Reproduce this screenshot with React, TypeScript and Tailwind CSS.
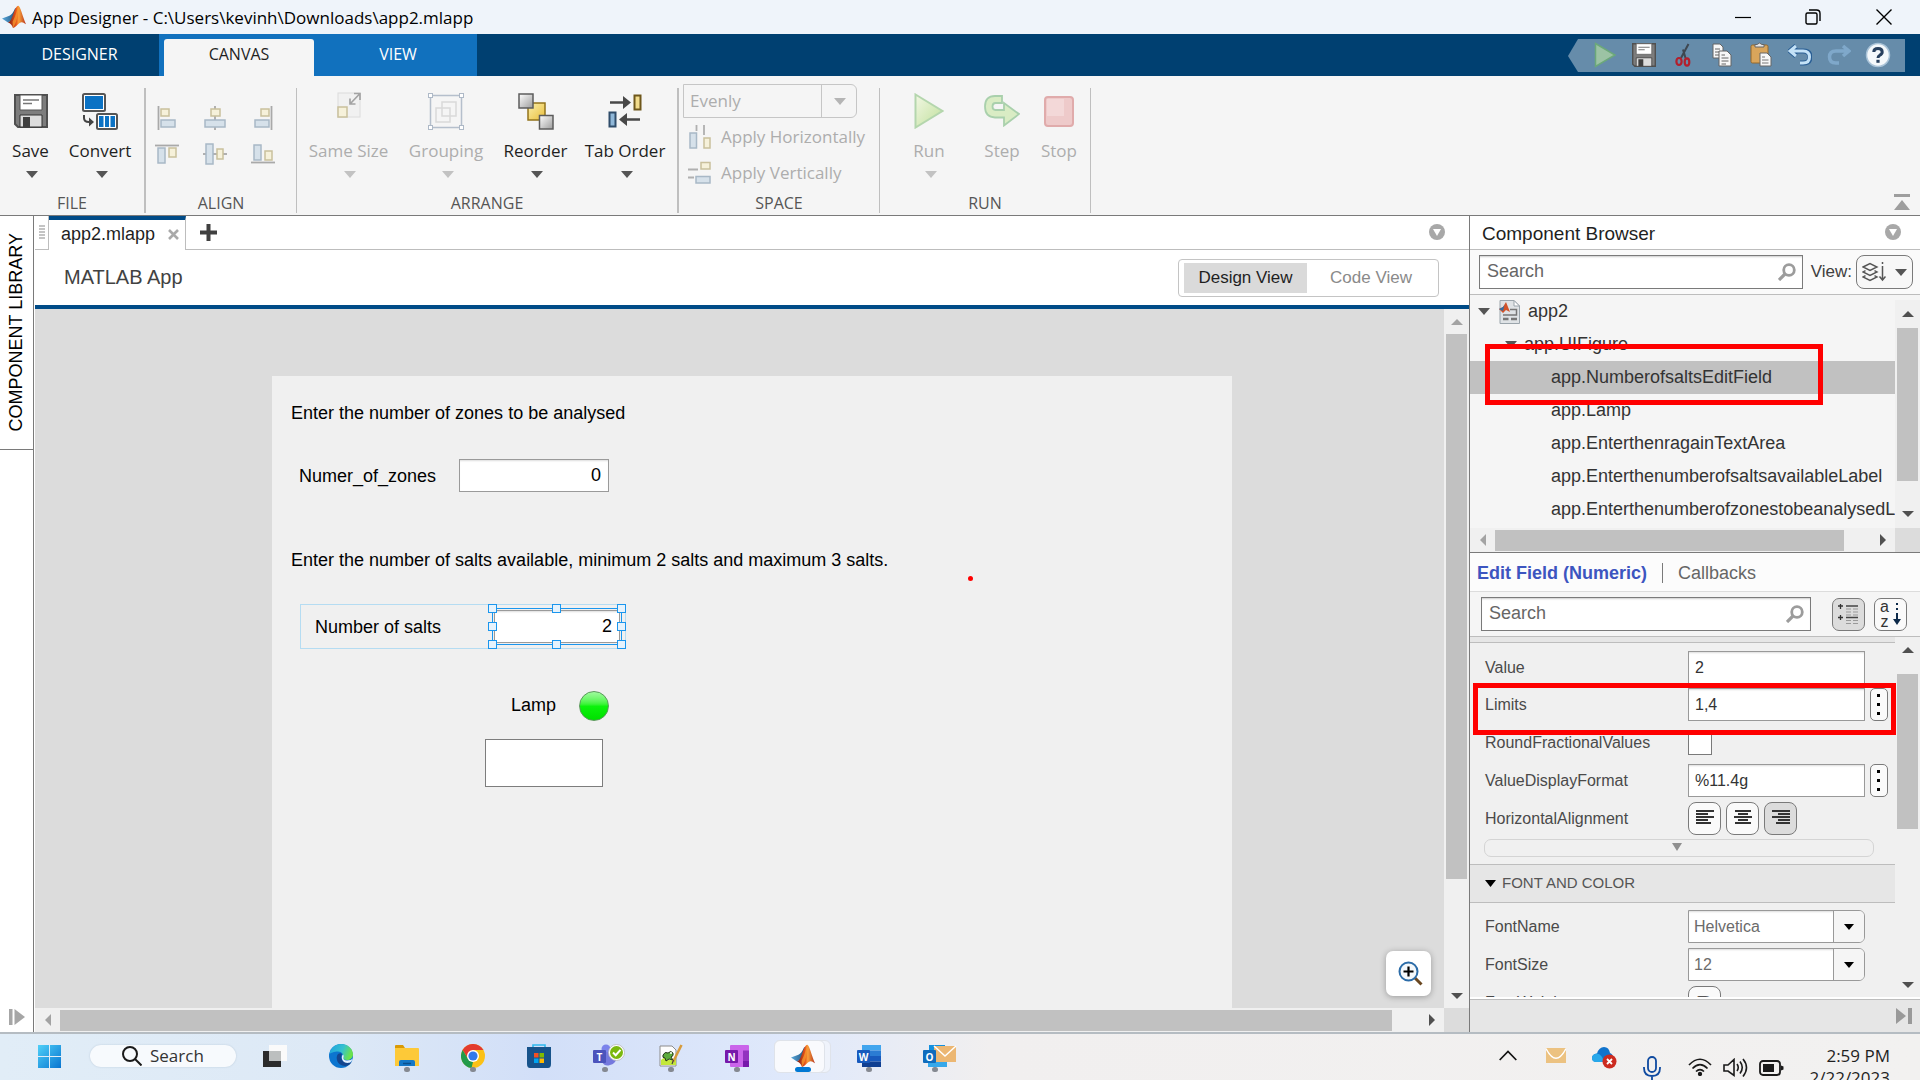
import React from "react";

type Kids = { children?: React.ReactNode };

function MatlabLogo({ size }: { size: number }) {
  return (
    <svg width={size} height={size} viewBox="0 0 24 24" aria-hidden="true">
      <defs>
        <linearGradient id="mlBlue" x1="0" y1="0" x2="1" y2="0">
          <stop offset="0" stopColor="#5aa9dc" />
          <stop offset="1" stopColor="#1d4f7c" />
        </linearGradient>
        <linearGradient id="mlRed" x1="0" y1="0" x2="1" y2="0">
          <stop offset="0" stopColor="#7a1c14" />
          <stop offset="0.45" stopColor="#e8551c" />
          <stop offset="0.6" stopColor="#f9a13b" />
          <stop offset="1" stopColor="#b5301b" />
        </linearGradient>
      </defs>
      <path d="M0 13.6 7.4 10.8C9.5 10 11.5 7 13 3.5L14.5 3 9.6 15.5 6 17.6Z" fill="url(#mlBlue)" />
      <path d="M6 17.6C8.5 16.5 9.5 14 11.5 8.500 13 4.500 14.500.8 16.200.8 18.300.8 20.500 11.500 24 19.200 21 17 19.500 16.600 17.600 18 15 20 13.500 22.300 11 23 10 20.500 8.500 18.200 6 17.600Z" fill="url(#mlRed)" />
      <path d="M16.200.8C15.300 5 13.200 12 10.600 16.800L11 23C14.500 18 16.800 8 16.200.8Z" fill="#f79a2d" opacity=".75" />
    </svg>
  );
}

function FloppyIcon({ size }: { size: number }) {
  return (
    <svg width={size} height={size} viewBox="0 0 34 34" aria-hidden="true">
      <path d="M1 1H33V33H4L1 30Z" fill="#7d7d7d" stroke="#505050" strokeWidth="2" />
      <path d="M6 1H28V16H6Z" fill="#fff" stroke="#555" />
      <path d="M9 6H25M9 9.500H18" stroke="#777" strokeWidth="1.500" />
      <path d="M6 21H28V33H6Z" fill="#dcdcdc" stroke="#333" />
      <path d="M9 23H16V33H9Z" fill="#3f3f3f" />
    </svg>
  );
}

function ConvertIcon() {
  return (
    <svg width="36" height="37" viewBox="0 0 36 37" aria-hidden="true">
      <rect x="1" y="1" width="22" height="17" rx="1.500" fill="#fff" stroke="#555" strokeWidth="2" />
      <rect x="3" y="3" width="18" height="13" fill="#0b72c4" />
      <rect x="15" y="21" width="20" height="15" rx="1.500" fill="#fff" stroke="#555" strokeWidth="2" />
      <path d="M17 23h4.500v11H17zM23 23h4v11h-4zM28.500 23H33v11h-4.500z" fill="#0b72c4" />
      <path d="M2 22v3q0 4 5 4h3" fill="none" stroke="#444" strokeWidth="2" />
      <path d="M7 24.500 12 29 7 33.500Z" fill="#444" />
    </svg>
  );
}

const alignShapes: Record<string, [string, number[], number[]]> = {
  "Align left": ["M3.500 0V24", [6, 3, 8, 7], [6, 14, 14, 7]],
  "Align center": ["M12 0V24", [8, 3, 9, 7], [2, 14, 20, 7]],
  "Align right": ["M20.500 0V24", [10, 3, 8, 7], [4, 14, 14, 7]],
  "Align top": ["M0 3.500H24", [14, 6, 7, 9], [3, 6, 7, 15]],
  "Align middle": ["M0 12H24", [14, 7, 6, 10], [3, 2, 7, 20]],
  "Align bottom": ["M0 20.500H24", [14, 9, 7, 9], [3, 3, 7, 15]],
};

function AlignIcon({ name }: { name: string }) {
  const [line, y, b] = alignShapes[name];
  return (
    <svg width="24" height="24" viewBox="0 0 24 24" aria-hidden="true">
      <path d={line} stroke="#a9a9a9" strokeWidth="1.800" />
      <rect x={y[0]} y={y[1]} width={y[2]} height={y[3]} fill="#f6f1da" stroke="#c9c09c" strokeWidth="1.500" />
      <rect x={b[0]} y={b[1]} width={b[2]} height={b[3]} fill="#d6e1ea" stroke="#a8b8c6" strokeWidth="1.500" />
    </svg>
  );
}

function SameSizeIcon() {
  return (
    <svg width="24" height="26" viewBox="0 0 24 26" className="-mt-[12px]" aria-hidden="true">
      <rect x="1" y="1" width="22" height="24" fill="#f1f1f1" stroke="#dcdcdc" />
      <rect x="1" y="15" width="9" height="10" fill="#f6f1da" stroke="#c9c09c" strokeWidth="1.500" />
      <path d="M13 12 23 1.500M17 1.500H23V8M13 6.500V12H18.500" fill="none" stroke="#a3a3a3" strokeWidth="1.700" />
    </svg>
  );
}

function GroupingIcon() {
  return (
    <svg width="36" height="37" viewBox="0 0 36 37" fill="none" aria-hidden="true">
      <rect x="2.500" y="2.500" width="31" height="32" stroke="#b5bfcc" strokeWidth="1.500" />
      <g fill="#fff" stroke="#aeb9c7">
        <rect x=".5" y=".5" width="4" height="4" />
        <rect x="31.500" y=".5" width="4" height="4" />
        <rect x=".5" y="32.500" width="4" height="4" />
        <rect x="31.500" y="32.500" width="4" height="4" />
      </g>
      <path d="M14 9H28V23H14ZM8 15H22V29H8ZM14 15H22V23H14Z" stroke="#d9d9d9" strokeWidth="1.500" />
    </svg>
  );
}

function ReorderIcon() {
  return (
    <svg width="36" height="37" viewBox="0 0 36 37" aria-hidden="true">
      <defs>
        <linearGradient id="roG" x1="0" y1="0" x2="1" y2="1">
          <stop offset="0" stopColor="#fff" />
          <stop offset="1" stopColor="#9c9c9c" />
        </linearGradient>
        <linearGradient id="roY" x1="0" y1="0" x2="1" y2="1">
          <stop offset="0" stopColor="#fbf0ad" />
          <stop offset="1" stopColor="#e9bd3a" />
        </linearGradient>
      </defs>
      <rect x="10" y="10" width="17" height="17" fill="url(#roY)" stroke="#92731b" strokeWidth="1.500" />
      <rect x="1" y="1" width="14" height="14" fill="url(#roG)" stroke="#5c5c5c" strokeWidth="1.500" />
      <rect x="21.500" y="22.500" width="13.500" height="13.500" fill="url(#roG)" stroke="#5c5c5c" strokeWidth="1.500" />
    </svg>
  );
}

function TabOrderIcon() {
  return (
    <svg width="34" height="34" viewBox="0 0 34 34" aria-hidden="true">
      <path d="M2 8.500H17M32 25.500H17" stroke="#484848" strokeWidth="2.600" />
      <path d="M15 2 23 8.500 15 15ZM19 19 11 25.500 19 32Z" fill="#484848" />
      <rect x="26.500" y="1.500" width="6" height="14" fill="#f2dc8c" stroke="#6e571b" strokeWidth="2" />
      <rect x="1.500" y="18.500" width="6" height="14" fill="#8fb7d8" stroke="#2f4c6a" strokeWidth="2" />
    </svg>
  );
}

function PlayIcon({ w, h }: { w: number; h: number }) {
  return (
    <svg width={w} height={h} viewBox="0 0 30 36" aria-hidden="true">
      <defs>
        <linearGradient id="plG" x1="0" y1="0" x2="1" y2="1">
          <stop offset="0" stopColor="#f2f7e4" />
          <stop offset="1" stopColor="#bfe09a" />
        </linearGradient>
      </defs>
      <path d="M1.500 1.500 28.500 18 1.500 34.500Z" fill="url(#plG)" stroke="#b4d6ad" strokeWidth="2" />
    </svg>
  );
}

function StepIcon() {
  return (
    <svg width="36" height="32" viewBox="0 0 36 32" aria-hidden="true">
      <path
        d="M18 1H11Q1 1 1 11.500T11 22.500H20V30.500L35 19 20 8V15H11.500Q8.500 15 8.500 11.500T11.500 8H18Z"
        fill="#d9ecc4"
        stroke="#a9d0ac"
        strokeWidth="1.800"
      />
    </svg>
  );
}

function StopIcon() {
  return (
    <svg width="30" height="31" viewBox="0 0 30 31" aria-hidden="true">
      <rect x="1" y="1" width="28" height="29" rx="3" fill="#eecaca" stroke="#e0abab" strokeWidth="2" />
      <rect x="3" y="3" width="17" height="17" fill="#f3d8d8" />
    </svg>
  );
}

function Caret({ w = 12, h = 7, color = "#555" }: { w?: number; h?: number; color?: string }) {
  return (
    <svg width={w} height={h} viewBox="0 0 12 7" preserveAspectRatio="none" aria-hidden="true">
      <path d="M0 0H12L6 7Z" fill={color} />
    </svg>
  );
}

function ToolButton({
  label,
  icon,
  className,
  disabled,
  arrow = true,
}: {
  label: string;
  icon: React.ReactNode;
  className: string;
  disabled?: boolean;
  arrow?: boolean;
}) {
  return (
    <button disabled={disabled} className={"flex flex-col items-center whitespace-nowrap pt-[3px] " + className}>
      <span className="flex h-10 items-center justify-center">{icon}</span>
      <span className={"mt-2 text-[17px] leading-6 " + (disabled ? "text-[#adadad]" : "text-[#1f1f1f]")}>{label}</span>
      {arrow && (
        <span className="mt-[5px] flex h-3 items-center pl-[3px]">
          <Caret color={disabled ? "#c2c2c2" : "#555"} />
        </span>
      )}
    </button>
  );
}

function Section({ title, className, children }: Kids & { title: string; className: string }) {
  return (
    <section aria-label={title} className={"flex shrink-0 flex-col border-[#bfbfbf] " + className}>
      <div className="flex flex-1">{children}</div>
      <div className="text-center text-[16px] leading-5 text-[#555]">{title}</div>
    </section>
  );
}

function SpaceIcon({ vertical }: { vertical?: boolean }) {
  return vertical ? (
    <svg width="24" height="24" viewBox="0 0 24 24" aria-hidden="true">
      <path d="M0 8.500H10M0 16.500H6" stroke="#b0b0b0" strokeWidth="1.800" />
      <rect x="13" y="1.500" width="9" height="6.500" fill="#f6f1da" stroke="#c9c09c" strokeWidth="1.500" />
      <rect x="8" y="15.500" width="14" height="6.500" fill="#d6e1ea" stroke="#a8b8c6" strokeWidth="1.500" />
    </svg>
  ) : (
    <svg width="24" height="24" viewBox="0 0 24 24" aria-hidden="true">
      <path d="M8.500 0V6M16 0V10" stroke="#b0b0b0" strokeWidth="1.800" />
      <rect x="2" y="8" width="6.500" height="15" fill="#d6e1ea" stroke="#a8b8c6" strokeWidth="1.500" />
      <rect x="16" y="13" width="6" height="10" fill="#f6f1da" stroke="#c9c09c" strokeWidth="1.500" />
    </svg>
  );
}

function TitleBar() {
  return (
    <header className="flex h-[34px] shrink-0 items-center bg-[#eff4fa] font-['Open_Sans',sans-serif]">
      <div className="ml-[2px] flex">
        <MatlabLogo size={24} />
      </div>
      <h1 className="ml-[6px] flex-1 pt-px text-[17px] text-black">App Designer - C:\Users\kevinh\Downloads\app2.mlapp</h1>
      <button aria-label="Minimize" className="flex h-full w-[70px] items-center justify-center">
        <svg width="16" height="16" viewBox="0 0 16 16"><path d="M0 8.500H16" stroke="#000" strokeWidth="1.200" /></svg>
      </button>
      <button aria-label="Restore" className="flex h-full w-[70px] items-center justify-center">
        <svg width="16" height="16" viewBox="0 0 16 16" fill="none" stroke="#000" strokeWidth="1.400">
          <rect x="1" y="4" width="11" height="11" rx="1.500" />
          <path d="M4 1H11.500Q15 1 15 4.500V12" />
        </svg>
      </button>
      <button aria-label="Close" className="flex h-full w-[72px] items-center justify-center">
        <svg width="16" height="16" viewBox="0 0 16 16"><path d="M.5.5 15.500 15.500M15.500.5.5 15.500" stroke="#000" strokeWidth="1.400" /></svg>
      </button>
    </header>
  );
}

const quick: [string, React.ReactNode][] = [
  ["Run", <svg width="22" height="26" viewBox="0 0 22 26"><path d="M1.500 1.500 21 13 1.500 24.500Z" fill="#9cc3a4" stroke="#6ba87a" strokeWidth="1.500" /></svg>],
  ["Save", <FloppyIcon size={24} />],
  ["Cut", <svg width="16" height="24" viewBox="0 0 16 24" fill="none"><path d="M13.500 1 6 15M8 6.500 10.500 15" stroke="#3f4750" strokeWidth="2" /><ellipse cx="4" cy="18.500" rx="2.600" ry="3.500" stroke="#b31f2c" strokeWidth="2.200" /><ellipse cx="12" cy="19" rx="2.300" ry="3.700" stroke="#b31f2c" strokeWidth="2.200" /></svg>],
  ["Copy", <svg width="20" height="24" viewBox="0 0 20 24" stroke="#646464"><path d="M1 1H8L11 4V15H1Z" fill="#f7f7f7" /><path d="M3 6H8M3 9H8M3 12H8" /><path d="M7 8H15L19 12V23H7Z" fill="#f7f7f7" /><path d="M9.500 12H13M9.500 15H16.500M9.500 18H16.500M9.500 21H14" /></svg>],
  ["Paste", <svg width="22" height="25" viewBox="0 0 22 25"><rect x="1" y="3" width="17" height="18" rx="1.500" fill="#d9a55b" stroke="#94682c" /><path d="M5 5V2.500H7Q9.500-.5 12 2.500H14V5Z" fill="#e5e5e5" stroke="#666" /><path d="M10 11H17L21 15V24H10Z" fill="#f7f7f7" stroke="#666" /><path d="M12 15H15M12 18H18.500M12 21H18.500" stroke="#777" /></svg>],
  ["Undo", <svg width="24" height="22" viewBox="0 0 24 22"><path d="M8 2 2 7 8 12M2 7H15Q22 7 22 13T15 19H12" fill="none" stroke="#2a5f95" strokeWidth="5" /><path d="M8 2 2 7 8 12M3 7H15Q21.500 7 21.500 13T15 19H12" fill="none" stroke="#c4e2f7" strokeWidth="3" /></svg>],
  ["Redo", <svg width="24" height="22" viewBox="0 0 24 22"><path d="M16 2 22 7 16 12M21 7H9Q2.500 7 2.500 13T9 19H12" fill="none" stroke="#7fa8ca" strokeWidth="3.500" /></svg>],
  ["Help", <svg width="26" height="26" viewBox="0 0 26 26"><circle cx="13" cy="13" r="11.500" fill="#f4f8fb" stroke="#a9c3d8" strokeWidth="1.500" /><path d="M8.800 10Q8.800 6.500 13 6.500T17.200 10Q17.200 12 14.800 13.200 13 14.200 13 16" fill="none" stroke="#28405e" strokeWidth="3" /><rect x="11.400" y="17.800" width="3.200" height="3" fill="#28405e" /></svg>],
];

function RibbonTabs() {
  return (
    <nav className="flex h-[42px] shrink-0 bg-[#004071] font-['Open_Sans',sans-serif] text-[16px] text-white">
      <button className="w-[159px] pb-[2px]">DESIGNER</button>
      <div className="flex bg-[#1171be] pl-[5px]">
        <button className="mt-[5px] w-[150px] rounded-t-[3px] bg-[#f5f5f5] pb-[7px] text-[#1f1f1f]">CANVAS</button>
        <button className="w-[163px] pb-[2px] pl-[5px]">VIEW</button>
      </div>
      <div className="mt-[5px] mr-[15px] ml-auto flex h-[33px]">
        <svg width="10" height="33" viewBox="0 0 10 33" aria-hidden="true"><path d="M10 0V33L0 17Z" fill="#668caa" /></svg>
        <div className="flex items-center bg-[#668caa] pr-[8px] pb-[2px] pl-[7px]">
          {quick.map(([name, icon]) => (
            <button key={name} aria-label={name} className="flex w-[39px] justify-center">
              {icon}
            </button>
          ))}
        </div>
      </div>
    </nav>
  );
}

function Ribbon() {
  return (
    <div className="flex h-[140px] shrink-0 border-b border-[#7a7a7a] bg-[#f5f5f5] pt-3 pb-[2px] font-['Open_Sans',sans-serif]">
      <Section title="FILE" className="w-[146px] border-r-2">
        <ToolButton label="Save" className="w-[61px]" icon={<FloppyIcon size={34} />} />
        <ToolButton label="Convert" className="w-[78px]" icon={<ConvertIcon />} />
      </Section>
      <Section title="ALIGN" className="w-[151px] border-r">
        <div className="grid h-fit grid-cols-[48px_48px_48px] gap-y-[12px] pt-[18px]">
          {Object.keys(alignShapes).map((n) => (
            <button key={n} aria-label={n} disabled className="flex h-6 justify-center pr-[7px]">
              <AlignIcon name={n} />
            </button>
          ))}
        </div>
      </Section>
      <Section title="ARRANGE" className="w-[382px] border-r-2">
        <ToolButton label="Same Size" disabled className="w-[103px]" icon={<SameSizeIcon />} />
        <ToolButton label="Grouping" disabled className="w-[92px]" icon={<GroupingIcon />} />
        <ToolButton label="Reorder" className="w-[87px]" icon={<ReorderIcon />} />
        <ToolButton label="Tab Order" className="w-[92px]" icon={<TabOrderIcon />} />
      </Section>
      <Section title="SPACE" className="w-[201px] border-r">
        <div className="-mt-[4px] flex flex-col items-start pl-1">
          <div className="relative">
            <select
              aria-label="Spacing"
              disabled
              className="h-[34px] w-[174px] appearance-none rounded-r-[6px] border border-[#c6c6c6] bg-transparent pl-[6px] text-[17px] text-[#adadad] opacity-100"
            >
              <option>Evenly</option>
            </select>
            <span className="pointer-events-none absolute top-[1px] right-0 flex h-8 w-[36px] items-center justify-center border-l border-[#c6c6c6]">
              <Caret color="#b5b5b5" />
            </span>
          </div>
          <button disabled className="mt-[7px] flex h-6 items-center gap-[9px] pl-[5px] text-[17px] whitespace-nowrap text-[#adadad]">
            <SpaceIcon />
            Apply Horizontally
          </button>
          <button disabled className="mt-3 flex h-6 items-center gap-[9px] pl-[5px] text-[17px] whitespace-nowrap text-[#adadad]">
            <SpaceIcon vertical />
            Apply Vertically
          </button>
        </div>
      </Section>
      <Section title="RUN" className="w-[211px] border-r">
        <ToolButton label="Run" disabled className="ml-[9px] w-[80px]" icon={<PlayIcon w={30} h={36} />} />
        <ToolButton label="Step" disabled arrow={false} className="w-[66px]" icon={<StepIcon />} />
        <ToolButton label="Stop" disabled arrow={false} className="w-[48px]" icon={<StopIcon />} />
      </Section>
      <button aria-label="Collapse toolstrip" className="mr-[10px] ml-auto flex items-end pb-[2px]">
        <svg width="16" height="17" viewBox="0 0 16 17"><path d="M0 0H16V3H0ZM8 6 16 16H0Z" fill="#9e9e9e" /></svg>
      </button>
    </div>
  );
}

function Arrow({ dir, faint }: { dir: "up" | "down" | "left" | "right"; faint?: boolean }) {
  const d = { up: "M0 9 6 3 12 9Z", down: "M0 3 6 9 12 3Z", left: "M9 0 3 6 9 12Z", right: "M3 0 9 6 3 12Z" }[dir];
  return (
    <svg width="12" height="12" viewBox="0 0 12 12" aria-hidden="true">
      <path d={d} fill={faint ? "#a3a3a3" : "#505050"} />
    </svg>
  );
}

function VScroll({ start, size, cap = "h-[25px]", faint }: { start: number; size: number; cap?: string; faint?: boolean }) {
  return (
    <div className="flex h-full w-[25px] shrink-0 flex-col bg-[#f0f0f0]">
      <button aria-label="Scroll up" className={"flex shrink-0 items-center justify-center " + cap}><Arrow dir="up" faint={faint} /></button>
      <div className="flex min-h-0 flex-1 flex-col items-center">
        <div style={{ height: start + "%" }} />
        <div className="w-[21px] bg-[#c1c1c1]" style={{ height: size + "%" }} />
      </div>
      <button aria-label="Scroll down" className={"flex shrink-0 items-center justify-center " + cap}><Arrow dir="down" /></button>
    </div>
  );
}

function HScroll({ size }: { size: number }) {
  return (
    <div className="flex h-6 min-w-0 flex-1 bg-[#f0f0f0]">
      <button aria-label="Scroll left" className="flex w-[25px] shrink-0 items-center justify-center"><Arrow dir="left" faint /></button>
      <div className="flex min-w-0 flex-1 items-center">
        <div className="h-[21px] bg-[#c1c1c1]" style={{ width: size + "%" }} />
      </div>
      <button aria-label="Scroll right" className="flex w-[25px] shrink-0 items-center justify-center"><Arrow dir="right" /></button>
    </div>
  );
}

function MenuDot() {
  return (
    <svg width="16" height="16" viewBox="0 0 16 16" aria-hidden="true">
      <circle cx="8" cy="8" r="8" fill="#a8a8a8" />
      <path d="M4 5H12L8 12Z" fill="#fff" />
    </svg>
  );
}

function LibraryRail() {
  return (
    <aside className="flex w-[34px] shrink-0 flex-col border-r border-[#7a7a7a] bg-white">
      <button className="flex h-[234px] items-center justify-center border-b border-[#7a7a7a] text-[18px] text-black">
        <span className="rotate-180 [writing-mode:vertical-rl]">COMPONENT LIBRARY</span>
      </button>
      <button aria-label="Expand library" className="mt-auto mb-[7px] flex justify-center">
        <svg width="16" height="16" viewBox="0 0 16 16"><path d="M0 0H3.500V16H0ZM5.500 0 16 8 5.500 16Z" fill="#a6a6a6" /></svg>
      </button>
    </aside>
  );
}

function Handles() {
  const spots = [
    "left-0 top-0", "left-[64px] top-0", "left-[129px] top-0",
    "left-0 top-[18px]", "left-[129px] top-[18px]",
    "left-0 top-[36px]", "left-[64px] top-[36px]", "left-[129px] top-[36px]",
  ];
  return (
    <div className="absolute top-[228px] left-[216px] h-[45px] w-[138px]">
      <div className="absolute inset-[4px] border border-[#1a96ee]" />
      {spots.map((s) => (
        <div key={s} className={"absolute h-[9px] w-[9px] border border-[#1a96ee] bg-[#e6f3fd] " + s} />
      ))}
    </div>
  );
}

const fieldBox = "absolute h-[33px] border border-[#9a9a9a] bg-white px-[7px] text-right text-[18px] text-black shadow-[inset_0_2px_2px_-1px_#ddd]";

function Figure() {
  return (
    <div className="absolute top-[67px] left-[237px] h-[760px] w-[960px] bg-[#f0f0f0] text-[18px] leading-6 whitespace-nowrap text-black">
      <p className="absolute top-[25px] left-[19px]">Enter the number of zones to be analysed</p>
      <label htmlFor="zones" className="absolute top-[88px] left-[27px]">Numer_of_zones</label>
      <input id="zones" readOnly value="0" className={fieldBox + " top-[83px] left-[187px] w-[150px]"} />
      <p className="absolute top-[172px] left-[19px]">Enter the number of salts available, minimum 2 salts and maximum 3 salts.</p>
      <div className="absolute top-[228px] left-[28px] h-[45px] w-[326px] border border-[#b5dcf2]" />
      <label htmlFor="salts" className="absolute top-[239px] left-[43px]">Number of salts</label>
      <input id="salts" readOnly value="2" className={fieldBox + " top-[234px] left-[222px] w-[126px]"} />
      <Handles />
      <span className="absolute top-[317px] left-[239px]">Lamp</span>
      <div className="absolute top-[315px] left-[307px] h-[30px] w-[30px] rounded-full border border-[#5a9a5a] bg-linear-to-b from-[#9dfb9d] via-[#0cf30c] to-[#00e000]" />
      <textarea aria-label="Enter the nr again" readOnly className="absolute top-[363px] left-[213px] h-[48px] w-[118px] resize-none border border-[#7d7d7d] bg-white" />
      <div className="absolute top-[200px] left-[696px] h-[5px] w-[5px] rounded-full bg-[#f00]" />
    </div>
  );
}

function Editor() {
  return (
    <main className="ml-px flex min-w-0 flex-1 flex-col bg-white">
      <div className="flex h-[34px] shrink-0">
        <div className="flex w-[14px] justify-end border-r border-b border-[#bdbdbd] pr-[3px] pt-[9px]">
          <div className="h-[15px] w-[6px] bg-[repeating-linear-gradient(#c4c4c4_0_2px,#fff_2px_3px)]" />
        </div>
        <div className="flex w-[137px] items-center border-t-4 border-r border-t-[#004b87] border-r-[#bdbdbd] pl-[12px]">
          <span className="pb-[2px] text-[18px] text-[#1f1f1f]">app2.mlapp</span>
          <button aria-label="Close tab" className="ml-[13px] pb-[2px]">
            <svg width="11" height="11" viewBox="0 0 11 11"><path d="M1 1 10 10M10 1 1 10" stroke="#a9a9a9" strokeWidth="2.600" /></svg>
          </button>
        </div>
        <div className="flex flex-1 items-center border-b border-[#bdbdbd] pr-[24px] pl-[14px]">
          <button aria-label="New tab">
            <svg width="17" height="17" viewBox="0 0 17 17"><path d="M8.500 0V17M0 8.500H17" stroke="#404040" strokeWidth="4" /></svg>
          </button>
          <button aria-label="Document actions" className="ml-auto pb-px"><MenuDot /></button>
        </div>
      </div>
      <div className="flex h-[55px] shrink-0 items-center pr-[30px] pl-[29px]">
        <h2 className="pb-[2px] text-[20px] text-[#424242]">MATLAB App</h2>
        <div className="ml-auto flex h-[38px] w-[261px] rounded-[4px] border border-[#c4c4c4] py-[3px] pr-[3px] pl-[5px] text-[17px]">
          <button className="w-[123px] bg-[#dadada] text-[#1f1f1f]">Design View</button>
          <button className="flex-1 text-[#8a8a8a]">Code View</button>
        </div>
      </div>
      <div className="h-1 shrink-0 bg-[#004b87]" />
      <div className="flex min-h-0 flex-1">
        <div className="relative min-w-0 flex-1 overflow-hidden bg-[#dcdcdc]">
          <Figure />
          <button aria-label="Zoom in" className="absolute right-[13px] bottom-[12px] flex h-[45px] w-[45px] items-center justify-center rounded-[7px] bg-white pl-[3px] shadow-[0_1px_6px_rgba(0,0,0,0.3)]">
            <svg width="25" height="25" viewBox="0 0 25 25"><path d="M17 17 23.500 23.500" stroke="#6a4720" strokeWidth="3" /><circle cx="10.500" cy="10.500" r="9" fill="#f4f8fb" stroke="#2c6ca8" strokeWidth="2" /><path d="M10.500 5.500V15.500M5.500 10.500H15.500" stroke="#000" strokeWidth="2.200" /></svg>
          </button>
        </div>
        <VScroll start={0} size={84} faint />
      </div>
      <div className="flex shrink-0">
        <HScroll size={98} />
        <div className="w-[25px] bg-[#dcdcdc]" />
      </div>
    </main>
  );
}

function SearchBox({ label, className }: { label: string; className: string }) {
  return (
    <div className={"relative h-[34px] " + className}>
      <input
        type="search"
        aria-label={label}
        placeholder="Search"
        className="h-full w-full border border-[#7a7a7a] bg-white pr-10 pb-px pl-[7px] text-[18px] shadow-[inset_0_2px_2px_-1px_#ccc] placeholder:text-[#666]"
      />
      <svg className="absolute top-[8px] right-[7px]" width="18" height="18" viewBox="0 0 18 18" aria-hidden="true">
        <circle cx="11" cy="7" r="5.300" fill="none" stroke="#9c9c9c" strokeWidth="2.800" />
        <path d="M7 11 1 17" stroke="#9c9c9c" strokeWidth="3.200" />
      </svg>
    </div>
  );
}

const tree = [
  "app.Lamp",
  "app.EnterthenragainTextArea",
  "app.EnterthenumberofsaltsavailableLabel",
  "app.EnterthenumberofzonestobeanalysedLabel",
];

function Browser() {
  return (
    <section aria-label="Component Browser" className="flex h-[337px] shrink-0 flex-col border-b border-[#7a7a7a]">
      <div className="flex h-[34px] shrink-0 items-center border-b border-[#bdbdbd] bg-white pr-[19px] pl-3">
        <h2 className="flex-1 pt-[3px] text-[19px] text-[#1f1f1f]">Component Browser</h2>
        <button aria-label="Browser actions" className="pb-px"><MenuDot /></button>
      </div>
      <div className="flex h-[45px] shrink-0 items-center border-b border-[#bdbdbd] bg-[#fafafa] pr-[7px] pl-[9px]">
        <SearchBox label="Search components" className="min-w-0 flex-1" />
        <span className="mr-1 ml-2 text-[17px] text-[#404040]">View:</span>
        <button aria-label="View options" className="flex h-[34px] w-[57px] items-center justify-center gap-[9px] rounded-[8px] border border-[#7a7a7a] bg-[#f7f7f7]">
          <svg width="24" height="20" viewBox="0 0 24 20" fill="none" stroke="#555">
            <path d="M1 5 8 1.500 15 5 8 8.500ZM3.500 8.700 1 10 8 13.500 15 10 12.500 8.700M3.500 13.700 1 15 8 18.500 15 15 12.500 13.700" strokeWidth="1.400" />
            <path d="M20.500 0V2M20.500 4V17M17.500 14.500 20.500 18 23.500 14.500" strokeWidth="1.500" />
          </svg>
          <Caret />
        </button>
      </div>
      <div className="relative flex min-h-0 flex-1 flex-col bg-[#f5f5f5]">
        <div className="flex min-h-0 flex-1">
          <ul className="min-w-0 flex-1 overflow-hidden text-[18px] leading-[33px] whitespace-nowrap text-[#333]">
            <li className="flex h-[33px] items-center pl-[8px]">
              <Caret />
              <svg className="mr-[8px] ml-[9px]" width="21" height="24" viewBox="0 0 21 24" aria-hidden="true">
                <path d="M1 .5H15L20.500 6V23.500H1Z" fill="#dfe3e6" stroke="#9aa4ab" />
                <path d="M15 .5V6H20.500Z" fill="#fff" stroke="#9aa4ab" />
                <path d="M11 9.500H17.500V15H4" fill="none" stroke="#777" strokeWidth="1.500" />
                <path d="M4 19H9.500M12 19H18" stroke="#777" strokeWidth="2.500" />
                <path d="M0 9 4 7 7 2 11 12 7 10 4 13Z" fill="#d2532a" />
                <path d="M0 9 4 7 5.500 5 4 11Z" fill="#2f6ea5" />
              </svg>
              app2
            </li>
            <li className="flex h-[33px] items-center pl-[35px]">
              <Caret />
              <span className="ml-[7px]">app.UIFigure</span>
            </li>
            <li className="h-[33px] bg-[#c1c1c1] pl-[81px]" aria-current="true">app.NumberofsaltsEditField</li>
            {tree.map((t) => (
              <li key={t} className="h-[33px] pl-[81px]">{t}</li>
            ))}
          </ul>
          <div className="flex pt-[5px]">
            <VScroll start={0} size={89} cap="h-[28px]" />
          </div>
        </div>
        <div className="flex shrink-0">
          <HScroll size={93} />
          <div className="w-[25px] bg-[#dcdcdc]" />
        </div>
        <div className="pointer-events-none absolute top-[49px] left-[15px] h-[61px] w-[338px] border-[5px] border-[#f00]" />
      </div>
    </section>
  );
}

function Row({ label, id, children }: Kids & { label: string; id?: string }) {
  return (
    <div className="flex h-[37px] shrink-0 items-center pl-[15px]">
      <label htmlFor={id} className="w-[203px] shrink-0 text-[16px] text-[#4a4a4a]">{label}</label>
      {children}
    </div>
  );
}

function PropInput({ id, value }: { id: string; value: string }) {
  return (
    <input id={id} readOnly value={value} className="h-[33px] w-[177px] border border-[#999] bg-white px-[6px] text-[16px] text-[#333] shadow-[inset_0_2px_2px_-1px_#ddd]" />
  );
}

function MoreButton({ label }: { label: string }) {
  return (
    <button aria-label={label} className="ml-[5px] flex h-[33px] w-[18px] items-center justify-center rounded-[5px] border border-[#7a7a7a] bg-[#fafafa] pr-px">
      <svg width="3" height="21" viewBox="0 0 3 21"><path d="M0 0H3V3H0ZM0 9H3V12H0ZM0 18H3V21H0Z" fill="#000" /></svg>
    </button>
  );
}

function PropSelect({ id, value }: { id: string; value: string }) {
  return (
    <div className="relative">
      <select id={id} className="h-[33px] w-[177px] appearance-none rounded-r-[6px] border border-[#999] bg-white pl-[5px] text-[16px] text-[#6b6b6b] shadow-[inset_0_2px_2px_-1px_#ddd]">
        <option>{value}</option>
      </select>
      <span className="pointer-events-none absolute top-[1px] right-[1px] flex h-[31px] w-[31px] items-center justify-center rounded-r-[5px] border-l border-[#999] bg-[#f5f5f5]">
        <Caret w={10} h={6} color="#000" />
      </span>
    </div>
  );
}

const alignLines: [string, string, string][] = [
  ["Left", "M0 1H18M0 4H12M0 7H18M0 10H12M0 13H15", "bg-[#fafafa]"],
  ["Center", "M1 1H17M4 4H14M0 7H18M4 10H14M1 13H17", "bg-[#fafafa]"],
  ["Right", "M0 1H18M6 4H18M0 7H18M6 10H18M4 13H18", "bg-[#dcdcdc]"],
];

function Inspector() {
  return (
    <section aria-label="Inspector" className="flex min-h-0 flex-1 flex-col">
      <div className="flex h-[39px] shrink-0 items-center border-b border-[#dcdcdc] bg-[#fcfcfc] pt-[2px] pl-[7px] text-[18px]">
        <button className="font-bold text-[#3c55c0]">Edit Field (Numeric)</button>
        <div className="mx-[15px] h-5 w-px bg-[#7a7a7a]" />
        <button className="text-[#666]">Callbacks</button>
      </div>
      <div className="flex h-[45px] shrink-0 items-center border-b border-[#bdbdbd] bg-[#f5f5f5] pr-[13px] pl-[11px]">
        <SearchBox label="Search properties" className="min-w-0 flex-1" />
        <button aria-label="Grouped" className="ml-[21px] flex h-[33px] w-[33px] items-center justify-center rounded-[7px] border border-[#7a7a7a] bg-[#dcdcdc]">
          <svg width="21" height="21" viewBox="0 0 21 21" fill="none">
            <path d="M0 2H5M2.500 0V5M0 13.500H5M2.500 11V16" stroke="#333" strokeWidth="1.300" />
            <path d="M8 2H20M8 13.500H20" stroke="#444" strokeWidth="1.500" />
            <path d="M8 5H13M15 5H20M8 8H13M15 8H20M8 11H13M15 11H20M8 16.500H13M15 16.500H20M8 19.500H13M15 19.500H20" stroke="#999" />
          </svg>
        </button>
        <button aria-label="Alphabetical" className="ml-[9px] flex h-[33px] w-[33px] items-center justify-center gap-[4px] rounded-[7px] border border-[#7a7a7a] bg-[#fafafa]">
          <span className="flex flex-col text-[16px] leading-[15px] text-[#333]"><span>a</span><span>z</span></span>
          <svg width="8" height="22" viewBox="0 0 8 22"><path d="M4 0V2M4 5V7M4 10V20" stroke="#0d2a4a" strokeWidth="2" /><path d="M0 16H8L4 22Z" fill="#0d2a4a" /></svg>
        </button>
      </div>
      <div className="relative flex min-h-0 flex-1 border-b-2 border-white bg-[#f0f0f0]">
        <div className="flex min-w-0 flex-1 flex-col overflow-hidden">
          <div className="h-[6px] shrink-0 border-b border-[#bdbdbd] bg-[#e6e6e6]" />
          <div className="flex shrink-0 flex-col pt-[6px]">
            <Row label="Value" id="p-value"><PropInput id="p-value" value="2" /></Row>
            <Row label="Limits" id="p-limits"><PropInput id="p-limits" value="1,4" /><MoreButton label="Edit limits" /></Row>
            <div className="flex flex-col gap-px pt-px">
              <Row label="RoundFractionalValues" id="p-round">
                <input id="p-round" type="checkbox" className="h-6 w-6 appearance-none border border-[#7a7a7a] bg-white" />
              </Row>
              <Row label="ValueDisplayFormat" id="p-format"><PropInput id="p-format" value="%11.4g" /><MoreButton label="Edit format" /></Row>
              <Row label="HorizontalAlignment">
                <div className="flex gap-[5px]">
                  {alignLines.map(([n, d, c]) => (
                    <button key={n} aria-label={n} className={"flex h-[33px] w-[33px] items-center justify-center rounded-[8px] border border-[#7a7a7a] pb-[3px] " + c}>
                      <svg width="18" height="14" viewBox="0 0 18 14"><path d={d} stroke="#333" strokeWidth="1.800" /></svg>
                    </button>
                  ))}
                </div>
              </Row>
            </div>
            <button aria-label="More properties" className="mt-[2px] mr-[21px] ml-[14px] flex h-[18px] items-center justify-center rounded-[7px] border border-[#d4d4d4] pr-1 pb-[2px]">
              <Caret w={10} h={8} color="#8f8f8f" />
            </button>
          </div>
          <h3 className="mt-[7px] flex h-[39px] shrink-0 items-center gap-[6px] border-y border-[#bdbdbd] bg-[#e6e6e6] pl-[15px] text-[15px] text-[#555]">
            <Caret w={11} h={7} color="#000" />
            FONT AND COLOR
          </h3>
          <div className="flex flex-col gap-px pt-[5px]">
            <Row label="FontName" id="p-font"><PropSelect id="p-font" value="Helvetica" /></Row>
            <Row label="FontSize" id="p-size"><PropSelect id="p-size" value="12" /></Row>
            <Row label="FontWeight">
              <button aria-label="Bold" className="h-[33px] w-[33px] rounded-[8px] border border-[#7a7a7a] bg-[#fafafa] font-['Liberation_Serif',serif] text-[22px] leading-6 font-bold text-[#555]">B</button>
            </Row>
          </div>
        </div>
        <VScroll start={4} size={50} />
        <div className="pointer-events-none absolute top-[46px] left-[3px] h-[52px] w-[423px] border-[5px] border-[#f00]" />
      </div>
      <div className="flex h-[33px] shrink-0 items-center justify-end border-t border-[#bdbdbd] bg-[#e6e6e6] pr-[7px]">
        <button aria-label="Collapse panel">
          <svg width="17" height="16" viewBox="0 0 17 16"><path d="M0 0 10 8 0 16ZM12 0H16V16H12Z" fill="#999" /></svg>
        </button>
      </div>
    </section>
  );
}

function Badge({ letter, fill }: { letter: string; fill: string }) {
  return (
    <span className={"absolute top-[6px] left-0 flex h-[13px] w-[13px] items-center justify-center rounded-[1px] font-['Open_Sans',sans-serif] text-[10px] leading-none font-bold text-white " + fill}>
      {letter}
    </span>
  );
}

const apps: [string, React.ReactNode, boolean][] = [
  ["Task view", <svg width="24" height="24" viewBox="0 0 24 24"><rect x="0" y="7" width="18" height="16" fill="#2b2b2b" /><rect x="6" y="1" width="18" height="16" fill="#fafafa" /><rect x="6" y="7" width="12" height="10" fill="#bcbfbf" /></svg>, false],
  ["Edge", <svg width="24" height="24" viewBox="0 0 24 24"><defs><linearGradient id="edG" x1="0" x2="1" y1="0" y2=".3"><stop offset="0" stopColor="#1da1e0" /><stop offset=".6" stopColor="#35c1cf" /><stop offset="1" stopColor="#6be24b" /></linearGradient></defs><circle cx="12" cy="12" r="12" fill="#0c75cf" /><path d="M.5 10C1.500 4 6 0 12 0 19 0 24 5 24 10.500 24 14 21 16 18 16 15 16 14 15 14.500 13.500 15 11 13 7.500 9 7.500 5 7.500 1.500 9 .5 10Z" fill="url(#edG)" /><path d="M9 10C6 13 8 22 16 22 19 22 21 20.500 22.500 18 19 19.500 13.500 18.500 12.500 14.500 12 12.500 12.500 11 13 10 12 9 10.500 9 9 10Z" fill="#14468f" /><path d="M14.500 13.500C14 15 15 16.500 18 16.500 20.500 16.500 23 15.500 23.500 14.500 23 19 19 19.500 16 18.500 12.500 17 12 12 14 10.500 15 11.500 14.800 12.700 14.500 13.500Z" fill="#e3eefc" /></svg>, false],
  ["File Explorer", <svg width="24" height="24" viewBox="0 0 24 24"><path d="M0 2Q0 1 1 1H8L10 4H0Z" fill="#d99a06" /><path d="M0 4H23Q24 4 24 5V22H0Z" fill="#fdc938" /><path d="M4 22V18Q4 16 6 16H18Q20 16 20 18V22Z" fill="#1478c8" /><path d="M8 19.500H16" stroke="#0b4f8c" strokeWidth="1.500" /></svg>, true],
  ["Chrome", <svg width="24" height="24" viewBox="0 0 24 24"><circle cx="12" cy="12" r="12" fill="#fbc116" /><path d="M1.600 6A12 12 0 0 1 22.400 6H12L7 14.500Z" fill="#e33b2e" /><path d="M1.600 6 7 14.800 12 18 10.500 24A12 12 0 0 1 1.600 6Z" fill="#229a4a" /><circle cx="12" cy="12" r="6" fill="#fff" /><circle cx="12" cy="12" r="4.600" fill="#3379ec" /></svg>, true],
  ["Store", <svg width="24" height="24" viewBox="0 0 24 24"><path d="M6 4V1H18V4" fill="none" stroke="#2fb9ee" strokeWidth="1.600" /><path d="M0 3H24V20Q24 24 21 24H3Q0 24 0 20Z" fill="#17538b" /><path d="M7 9H11.500V13.500H7Z" fill="#f25022" /><path d="M12.500 9H17V13.500H12.500Z" fill="#7fba00" /><path d="M7 14.500H11.500V19H7Z" fill="#00a4ef" /><path d="M12.500 14.500H17V19H12.500Z" fill="#ffb900" /></svg>, false],
  ["Teams", <><svg width="32" height="24" viewBox="0 0 32 24"><circle cx="13" cy="5" r="4.500" fill="#7b83eb" /><path d="M8 8H24V14Q22 20 17 21 12 23 9 18Z" fill="#7478dd" /><circle cx="23.500" cy="8.500" r="8" fill="#fff" stroke="#b5b5b5" strokeWidth=".8" /><circle cx="23.500" cy="8.500" r="6.500" fill="#7ab80e" /><path d="M20 8.500 22.700 11.200 27.500 5.800" fill="none" stroke="#fff" strokeWidth="2" /></svg><Badge letter="T" fill="bg-[#4b53bc]" /></>, true],
  ["Notepad++", <svg width="24" height="24" viewBox="0 0 24 24"><path d="M1 2H13L17 6V22H1Z" fill="#fdfdfd" stroke="#8c8c8c" /><path d="M2 16Q6 12 9 15T17 13V21H2Z" fill="#c3e83a" /><path d="M4 11Q6 7 9 9 12 6 14 9 15 12 12 13L14 16 10 15 7 17 6 14Q3 14 4 11Z" fill="#5cab3c" stroke="#1d2a14" strokeWidth=".9" /><circle cx="12" cy="9" r="1" fill="#fff" /><path d="M22.500 1 14 18" stroke="#d79b3c" strokeWidth="2.500" /><path d="M14.500 16 13 20" stroke="#444" strokeWidth="1.200" /></svg>, true],
  ["OneNote", <><svg width="24" height="24" viewBox="0 0 24 24"><rect x="5" y="1" width="19" height="22" rx="1" fill="#ca64ea" /><path d="M18 6.500H24V23H18Z" fill="#9332bf" /><path d="M18 17H24V23H18Z" fill="#7719aa" /></svg><Badge letter="N" fill="bg-[#7719aa]" /></>, true],
  ["MATLAB", <MatlabLogo size={24} />, true],
  ["Word", <><svg width="24" height="24" viewBox="0 0 24 24"><path d="M5 1H24V6.500H5Z" fill="#41a5ee" /><path d="M5 6.500H24V12H5Z" fill="#2b7cd3" /><path d="M5 12H24V17.500H5Z" fill="#185abd" /><path d="M5 17.500H24V23H5Z" fill="#103f91" /></svg><Badge letter="W" fill="bg-[#185abd]" /></>, true],
  ["Outlook", <><svg width="34" height="24" viewBox="0 0 34 24"><path d="M6 1H22V23H6Z" fill="#1490df" /><path d="M5 14H24V23H5Z" fill="#37a8ea" /><path d="M11 2H33V18H11Z" fill="#ecb773" /><path d="M11 2 22 12 33 2" fill="none" stroke="#fff" strokeWidth="1.500" /></svg><Badge letter="O" fill="bg-[#0f6cbd]" /></>, true],
];

function Taskbar() {
  return (
    <footer className="flex h-[46px] shrink-0 overflow-hidden bg-[linear-gradient(90deg,#e1edf7_0,#dde9f6_330px,#d2dff8_540px,#e0e9fb_800px,#f1efef_990px,#f2f1f0_100%)] font-['Open_Sans',sans-serif]">
      <button aria-label="Start" className="mt-[11px] ml-[38px] h-fit">
        <svg width="23" height="23" viewBox="0 0 23 23"><defs><linearGradient id="winG" x1="0" y1="0" x2="1" y2="1"><stop offset="0" stopColor="#4fd0f8" /><stop offset="1" stopColor="#0874d0" /></linearGradient></defs><path d="M0 0H11V11H0ZM12 0H23V11H12ZM0 12H11V23H0ZM12 12H23V23H12Z" fill="url(#winG)" /></svg>
      </button>
      <button className="mt-[11px] ml-[29px] flex h-[22px] w-[146px] items-center gap-[8px] rounded-full bg-[#f7fafd] pl-[32px] text-[17px] text-[#333] shadow-[0_0_2px_#b8c8d8]">
        <svg width="20" height="20" viewBox="0 0 20 20" fill="none" stroke="#1a1a1a" strokeWidth="2"><circle cx="8" cy="8" r="7" /><path d="M13 13 19.500 19.500" /></svg>
        Search
      </button>
      <div className="ml-[6px] flex">
        {apps.map(([name, icon, open]) => (
          <button key={name} aria-label={name} className="relative w-[66px]">
            {name === "MATLAB" && <span className="absolute top-[6px] left-[4px] h-[33px] w-[57px] rounded-[6px] border border-[#dfe3ea] bg-[#eff3fb]" />}
            {name === "MATLAB" && <span className="absolute top-[6px] left-[4px] h-[33px] w-[51px] rounded-[6px] border border-[#dfe3ea] bg-[#f9fafd]" />}
            <span className="absolute top-[10px] left-[21px]">{icon}</span>
            {open && (
              <span className={"absolute left-1/2 h-[5px] -translate-x-1/2 rounded-full " + (name === "MATLAB" ? "top-[33px] w-4 bg-[#0078d4]" : "top-[33px] w-[6px] bg-[#858991]")} />
            )}
          </button>
        ))}
      </div>
      <div className="ml-auto flex pr-[30px]">
        <button aria-label="Hidden icons" className="mt-[16px] h-fit">
          <svg width="18" height="11" viewBox="0 0 18 11"><path d="M.7 10 9 1.500 17.300 10" fill="none" stroke="#111" strokeWidth="1.700" /></svg>
        </button>
        <svg className="mt-[14px] ml-[29px]" width="20" height="16" viewBox="0 0 20 16"><path d="M0 0H20V15H0Z" fill="#ecc281" /><path d="M0 .5Q10 20 20 .5" fill="none" stroke="#fff" strokeWidth="1.300" /></svg>
        <svg className="mt-[13px] ml-[26px]" width="25" height="22" viewBox="0 0 25 22"><path d="M5 15Q0 15 0 11T5 6.500Q7 0 12 0T18 6Q21 7 21 11T17 15Z" fill="#1173cc" /><path d="M0 11Q0 7 5 6.500 10 7 12 15H4Q0 15 0 11Z" fill="#28a8ea" /><circle cx="17.500" cy="14.500" r="7" fill="#cc2b20" /><path d="M15 12 20 17M20 12 15 17" stroke="#fff" strokeWidth="1.800" /></svg>
        <svg className="mt-[22px] ml-[26px]" width="18" height="26" viewBox="0 0 18 26" fill="none" stroke="#0f4aa0" strokeWidth="1.800"><rect x="5" y="1" width="8" height="15" rx="4" /><path d="M1 11V12Q1 20 9 20T17 12V11M9 20V26" /></svg>
        <svg className="mt-[24px] ml-[27px]" width="24" height="18" viewBox="0 0 24 18" fill="none" stroke="#1a1a1a" strokeWidth="1.700"><path d="M1 7Q12-4.500 23 7M4.500 10.500Q12 3 19.500 10.500M8 13.500Q12 9.500 16 13.500" /><circle cx="12" cy="16" r="1.300" fill="#1a1a1a" /></svg>
        <svg className="mt-[24px] ml-[11px]" width="25" height="20" viewBox="0 0 25 20" fill="none" stroke="#1a1a1a" strokeWidth="1.600"><path d="M1 7H5L11 1.500V17.500L5 13H1ZM14 6Q16.500 9.500 14 13M17 3.500Q21.500 9.500 17 15.500M20 1Q27 9.500 20 18.500" /></svg>
        <svg className="mt-[26px] ml-[11px]" width="25" height="17" viewBox="0 0 25 17"><rect x="1" y="1" width="20" height="14" rx="3" fill="none" stroke="#1a1a1a" strokeWidth="1.800" /><rect x="4" y="4" width="11" height="8" fill="#1a1a1a" /><path d="M22 5.500 24.500 6.500V9.500L22 10.500Z" fill="#1a1a1a" /></svg>
        <time className="mt-[11px] ml-[25px] text-right text-[17px] leading-[22px] text-[#1f1f1f]">
          2:59 PM
          <br />
          2/22/2023
        </time>
      </div>
    </footer>
  );
}

export default function App() {
  return (
    <div className="flex h-screen flex-col overflow-hidden bg-white font-['Liberation_Sans',Arial,sans-serif]">
      <TitleBar />
      <RibbonTabs />
      <Ribbon />
      <div className="flex min-h-0 flex-1">
        <LibraryRail />
        <Editor />
        <aside className="flex w-[451px] shrink-0 flex-col border-l border-[#7a7a7a]">
          <Browser />
          <Inspector />
        </aside>
      </div>
      <div className="h-[2px] shrink-0 bg-[#b5bcc2]" />
      <Taskbar />
    </div>
  );
}
